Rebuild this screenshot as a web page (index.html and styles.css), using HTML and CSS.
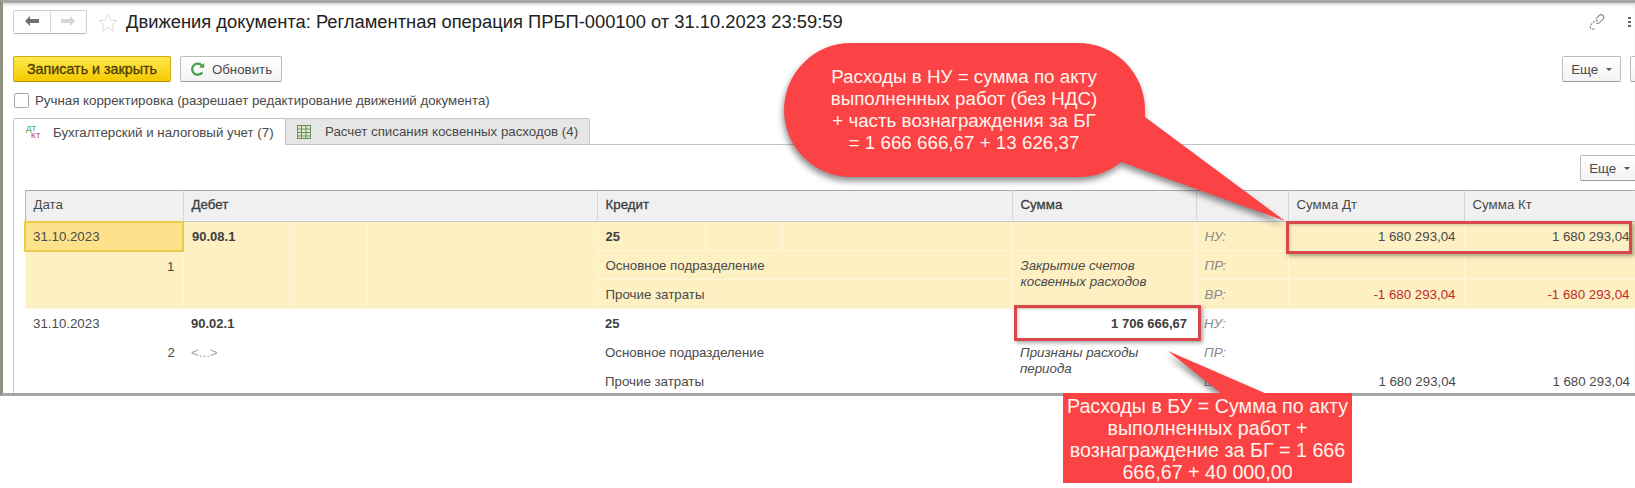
FILE: index.html
```html
<!DOCTYPE html>
<html lang="ru">
<head>
    <meta charset="UTF-8">
    <title>Движения документа</title>
    <link rel="stylesheet" href="styles.css">
</head>
<body>
    <div class="window">
        <div class="title-row">
            <div class="nav-buttons">
                <button class="nav-btn" type="button">
                    <svg width="16" height="12" viewBox="0 0 16 12"><path d="M1 6l5-5v3h9v4H6v3z" fill="#6f6f6f"/></svg>
                </button>
                <button class="nav-btn" type="button">
                    <svg width="16" height="12" viewBox="0 0 16 12"><path d="M15 6l-5-5v3H1v4h9v3z" fill="#d4d4d4"/></svg>
                </button>
            </div>
            <svg class="star" width="20" height="19" viewBox="0 0 20 19"><path d="M10 1l2.7 6 6.3.6-4.8 4.2 1.5 6.2L10 14.700 4.300 18l1.500-6.200L1 7.600 7.300 7z" fill="none" stroke="#dedede"/></svg>
            <h1 class="title">Движения документа: Регламентная операция ПРБП-000100 от 31.10.2023 23:59:59</h1>
            <svg class="link-icon" width="18" height="18" viewBox="0 0 18 18"><g fill="none" stroke="#8a8a8a" stroke-width="1.100"><path d="M8 6l3-3.300c1.400-1.300 3-1.300 4-.3s1 2.700-.2 3.900l-3.300 3.400c-1.200 1.100-2.700 1-3.600 0"/><path d="M10 8.200c-.9-1-2.400-1.100-3.600 0l-3.300 3.400c-1.200 1.200-1.200 2.900-.2 3.900s2.600 1 4-.3" stroke-dasharray="2.500 1"/></g></svg>
            <div class="kebab"><span></span><span></span><span></span></div>
        </div>

        <div class="toolbar">
            <button class="btn btn-primary" type="button">Записать и закрыть</button>
            <button class="btn btn-refresh" type="button">
                <svg width="15" height="15" viewBox="0 0 15 15"><path d="M12.200 10.300A5.500 5.500 0 1 1 11.700 3.500" fill="none" stroke="#3f9f45" stroke-width="2.200"/><path d="M9.300 5.800h4.900V.9z" fill="#3f9f45"/></svg>
                Обновить
            </button>
            <button class="btn btn-more" type="button">Еще <i class="caret"></i></button>
            <button class="btn btn-stub" type="button"></button>
        </div>

        <label class="manual-check"><span class="checkbox"></span>Ручная корректировка (разрешает редактирование движений документа)</label>

        <div class="tabs">
            <div class="tab tab-active">
                <span class="dtkt"><b class="dt">ДТ</b><b class="kt">КТ</b></span>
                Бухгалтерский и налоговый учет (7)
            </div>
            <div class="tab">
                <svg width="14" height="14" viewBox="0 0 14 14"><rect x=".5" y=".5" width="13" height="13" fill="#dfe8cf" stroke="#6d8d62"/><path d="M.5 4h13M.5 7.500h13M.5 11h13M4.500.5v13M9 .5v13" stroke="#6d8d62"/></svg>
                Расчет списания косвенных расходов (4)
            </div>
        </div>

        <div class="tab-body">
            <div class="table-bar">
                <button class="btn btn-more-table" type="button">Еще <i class="caret"></i></button>
            </div>
            <table class="moves">
                <colgroup>
                    <col class="c-date"><col class="c-a"><col class="c-b"><col class="c-c">
                    <col class="c-a2"><col class="c-b"><col class="c-c">
                    <col class="c-sum"><col class="c-reg"><col class="c-dt"><col class="c-kt">
                </colgroup>
                <thead>
                    <tr>
                        <th>Дата</th>
                        <th colspan="3" class="strong">Дебет</th>
                        <th colspan="3" class="strong">Кредит</th>
                        <th class="strong">Сумма</th>
                        <th></th>
                        <th>Сумма Дт</th>
                        <th>Сумма Кт</th>
                    </tr>
                </thead>
                <tbody class="row-current">
                    <tr>
                        <td class="cell-selected">31.10.2023</td>
                        <td rowspan="3" class="acc span-top">90.08.1</td>
                        <td rowspan="3"></td>
                        <td rowspan="3"></td>
                        <td class="acc">25</td>
                        <td></td>
                        <td></td>
                        <td></td>
                        <td class="reg">НУ:</td>
                        <td class="num">1 680 293,04</td>
                        <td class="num num-last">1 680 293,04</td>
                    </tr>
                    <tr>
                        <td rowspan="2" class="line-no">1</td>
                        <td colspan="3">Основное подразделение</td>
                        <td rowspan="2" class="note">Закрытие счетов косвенных расходов</td>
                        <td class="reg">ПР:</td>
                        <td></td>
                        <td></td>
                    </tr>
                    <tr>
                        <td colspan="3">Прочие затраты</td>
                        <td class="reg">ВР:</td>
                        <td class="num neg">-1 680 293,04</td>
                        <td class="num num-last neg">-1 680 293,04</td>
                    </tr>
                </tbody>
                <tbody class="row-plain">
                    <tr>
                        <td>31.10.2023</td>
                        <td colspan="3" class="acc">90.02.1</td>
                        <td colspan="3" class="acc">25</td>
                        <td class="num num-sum acc">1 706 666,67</td>
                        <td class="reg">НУ:</td>
                        <td></td>
                        <td></td>
                    </tr>
                    <tr>
                        <td rowspan="2" class="line-no">2</td>
                        <td colspan="3" class="empty">&lt;...&gt;</td>
                        <td colspan="3">Основное подразделение</td>
                        <td rowspan="2" class="note">Признаны расходы периода</td>
                        <td class="reg">ПР:</td>
                        <td></td>
                        <td></td>
                    </tr>
                    <tr>
                        <td colspan="3"></td>
                        <td colspan="3">Прочие затраты</td>
                        <td class="reg">ВР:</td>
                        <td class="num">1 680 293,04</td>
                        <td class="num num-last">1 680 293,04</td>
                    </tr>
                </tbody>
            </table>
        </div>
    </div>

    <!-- пометки поверх скриншота -->
    <div class="mark mark-nu"></div>
    <div class="mark mark-bu"></div>
    <svg class="callout-shapes" width="1635" height="488" viewBox="0 0 1635 488">
        <path d="M851 43H1078A67 67 0 0 1 1145 110V117L1285 221L1121 162A67 67 0 0 1 1078 177H851A67 67 0 0 1 851 43Z" fill="#fb4345"/>
        <path d="M1168 351L1222 394H1267Z" fill="#fb4345"/>
    </svg>
    <div class="callout callout-nu">Расходы в НУ = сумма по акту выполненных работ (без НДС)<br>+ часть вознаграждения за БГ<br>= 1 666 666,67 + 13 626,37</div>
    <div class="callout callout-bu">Расходы в БУ = Сумма по акту выполненных работ + вознаграждение за БГ = 1 666 666,67 + 40 000,00</div>
</body>
</html>
```

FILE: styles.css
```css
html, body {
    margin: 0;
    height: 488px;
    overflow: hidden;
    background: #fff;
}
body {
    position: relative;
    font-family: "Liberation Sans", Arial, sans-serif;
    font-size: 13.3px;
    color: #4a4a4a;
}
button {
    font-family: inherit;
    font-size: 13.3px;
    color: #4a4a4a;
    padding: 0;
}
.window {
    box-sizing: border-box;
    height: 396px;
    overflow: hidden;
    border-top: 3px solid #a6a6a6;
    border-bottom: 3px solid #a6a6a6;
    border-left: 3px solid #8f8f82;
    box-shadow: inset 0 3px 3px -1px #dcdcdc;
}
.title-row {
    display: flex;
    align-items: center;
    height: 24px;
    margin-top: 7px;
    padding-left: 10px;
}
.nav-buttons {
    display: flex;
    width: 74px;
    height: 24px;
    box-sizing: border-box;
    border: 1px solid #d0d0d0;
    border-bottom-color: #b5b5b5;
    border-radius: 2px;
}
.nav-btn {
    flex: 1;
    background: #fff;
    border: none;
    border-right: 1px solid #d8d8d8;
}
.nav-btn:last-child {
    border-right: none;
}
.star {
    margin-left: 11px;
}
.title {
    margin: 0 0 0 8px;
    font-size: 18.35px;
    font-weight: normal;
    color: #222;
    white-space: nowrap;
}
.link-icon {
    margin-left: auto;
}
.kebab {
    display: flex;
    flex-direction: column;
    gap: 2px;
    margin: 0 4px 0 22px;
}
.kebab span {
    width: 3px;
    height: 2px;
    background: #666;
}
.toolbar {
    display: flex;
    height: 26px;
    margin-top: 22px;
    padding-left: 10px;
}
.btn {
    box-sizing: border-box;
    height: 26px;
    background: linear-gradient(#fff, #f3f3f3);
    border: 1px solid #bdbdbd;
    border-bottom-color: #9a9a9a;
    border-radius: 2px;
    flex-shrink: 0;
}
.btn-primary {
    width: 158px;
    background: linear-gradient(#ffe94f, #f6c900);
    border-color: #cfae12;
    border-bottom-color: #b09300;
    font-size: 14.3px;
    color: #4a3c00;
    -webkit-text-stroke: 0.3px #4a3c00;
}
.btn-refresh {
    display: flex;
    align-items: center;
    justify-content: center;
    gap: 7px;
    width: 102px;
    margin-left: 9px;
}
.btn-more {
    width: 59px;
    margin-left: auto;
}
.btn-stub {
    width: 14px;
    margin-left: 9px;
    margin-right: -9px;
}
.btn-more-table {
    width: 59px;
    margin-right: -4px;
}
.caret {
    display: inline-block;
    width: 0;
    height: 0;
    margin-left: 4px;
    vertical-align: middle;
    border-top: 3px solid #555;
    border-left: 3px solid transparent;
    border-right: 3px solid transparent;
}
.manual-check {
    display: flex;
    align-items: center;
    gap: 6px;
    height: 15px;
    margin-top: 11px;
    padding-left: 11px;
}
.checkbox {
    box-sizing: border-box;
    width: 15px;
    height: 15px;
    border: 1px solid #a8a8a8;
    border-radius: 2px;
}
.tabs {
    display: flex;
    height: 27px;
    margin-top: 10px;
    padding-left: 10px;
}
.tab {
    display: flex;
    align-items: center;
    gap: 14px;
    box-sizing: border-box;
    width: 304px;
    padding-left: 11px;
    background: #e6e6e6;
    border: 1px solid #c4c4c4;
    border-left: none;
    border-radius: 0 2px 0 0;
}
.tab-active {
    width: 273px;
    padding-left: 12px;
    gap: 11px;
    background: #fff;
    border-left: 1px solid #c4c4c4;
    border-bottom: none;
    border-radius: 2px 2px 0 0;
}
.dtkt {
    display: flex;
    flex-direction: column;
    width: 16px;
    font-size: 8px;
    line-height: 7px;
}
.dt {
    font-weight: normal;
    color: #2f9a48;
}
.kt {
    font-weight: normal;
    margin-left: 5px;
    color: #b0353a;
}
.tab-body {
    margin-left: 10px;
    padding-top: 10px;
    border-left: 1px solid #c4c4c4;
    position: relative;
}
.tab-body::before {
    content: "";
    position: absolute;
    top: -1px;
    left: 272px;
    right: 0;
    height: 1px;
    background: #c4c4c4;
}
.table-bar {
    display: flex;
    justify-content: flex-end;
    height: 26px;
}
.moves {
    table-layout: fixed;
    width: 1611px;
    margin: 9px 0 0 10px;
    border-collapse: collapse;
    border-top: 1px solid #ababab;
}
.c-date { width: 158px; }
.c-a { width: 107px; }
.c-a2 { width: 108px; }
.c-b { width: 77px; }
.c-c { width: 230px; }
.c-sum { width: 184px; }
.c-reg { width: 92px; }
.c-dt { width: 176px; }
.c-kt { width: 172px; }
.moves th {
    height: 31px;
    padding: 0 8px 3px;
    box-sizing: border-box;
    background: #f0f0f0;
    border-right: 1px solid #d6d6d6;
    border-bottom: 1px solid #c8c8c8;
    font-weight: normal;
    text-align: left;
}
.moves th:first-child {
    border-left: 1px solid #b5b5b5;
}
.moves .strong {
    color: #3c3c3c;
    -webkit-text-stroke: 0.3px #3c3c3c;
}
.moves td {
    height: 29px;
    padding: 0 8px;
    box-sizing: border-box;
    white-space: nowrap;
    overflow: hidden;
}
.row-current td {
    background: #fdf0c3;
    border: 1px solid #fff6dc;
}
.row-plain tr:first-child td {
    border-top: 1px solid #dcdcdc;
}
.moves .cell-selected {
    padding-left: 7px;
    background: #fde28b;
    border: 2px solid #edc94c;
}
.moves .acc {
    font-weight: bold;
    font-size: 13px;
    color: #404040;
}
.moves .span-top {
    vertical-align: top;
    padding-top: 7px;
}
.moves .line-no {
    vertical-align: top;
    padding-top: 7px;
    text-align: right;
}
.moves .note {
    padding-top: 7px;
    vertical-align: top;
    font-style: italic;
    line-height: 16px;
    white-space: normal;
}
.moves .reg {
    font-style: italic;
    color: #8a8a8a;
}
.moves .num {
    text-align: right;
}
.moves .num-last {
    padding-right: 6px;
}
.moves .num-sum {
    padding-right: 9px;
}
.moves .neg {
    color: #c22a2a;
}
.moves .empty {
    color: #a5a5a5;
}

.mark {
    position: absolute;
    box-sizing: border-box;
    border: 3px solid #d9474b;
    box-shadow: 2px 2px 4px rgba(0, 0, 0, 0.35), inset 1px 1px 3px rgba(0, 0, 0, 0.2);
}
.mark-nu {
    left: 1286px;
    top: 221px;
    width: 346px;
    height: 33px;
}
.mark-bu {
    left: 1014px;
    top: 305px;
    width: 187px;
    height: 36px;
}
.callout-shapes {
    position: absolute;
    left: 0;
    top: 0;
    filter: drop-shadow(-1px 4px 3px rgba(0, 0, 0, 0.45));
}
.callout {
    position: absolute;
    box-sizing: border-box;
    color: #fff4ee;
    font-size: 18.8px;
    line-height: 22px;
    text-align: center;
}
.callout-nu {
    left: 814px;
    top: 66px;
    width: 300px;
}
.callout-bu {
    left: 1063px;
    top: 393px;
    width: 289px;
    height: 90px;
    padding-top: 2px;
    font-size: 19.7px;
    background: #fb4345;
}
```
